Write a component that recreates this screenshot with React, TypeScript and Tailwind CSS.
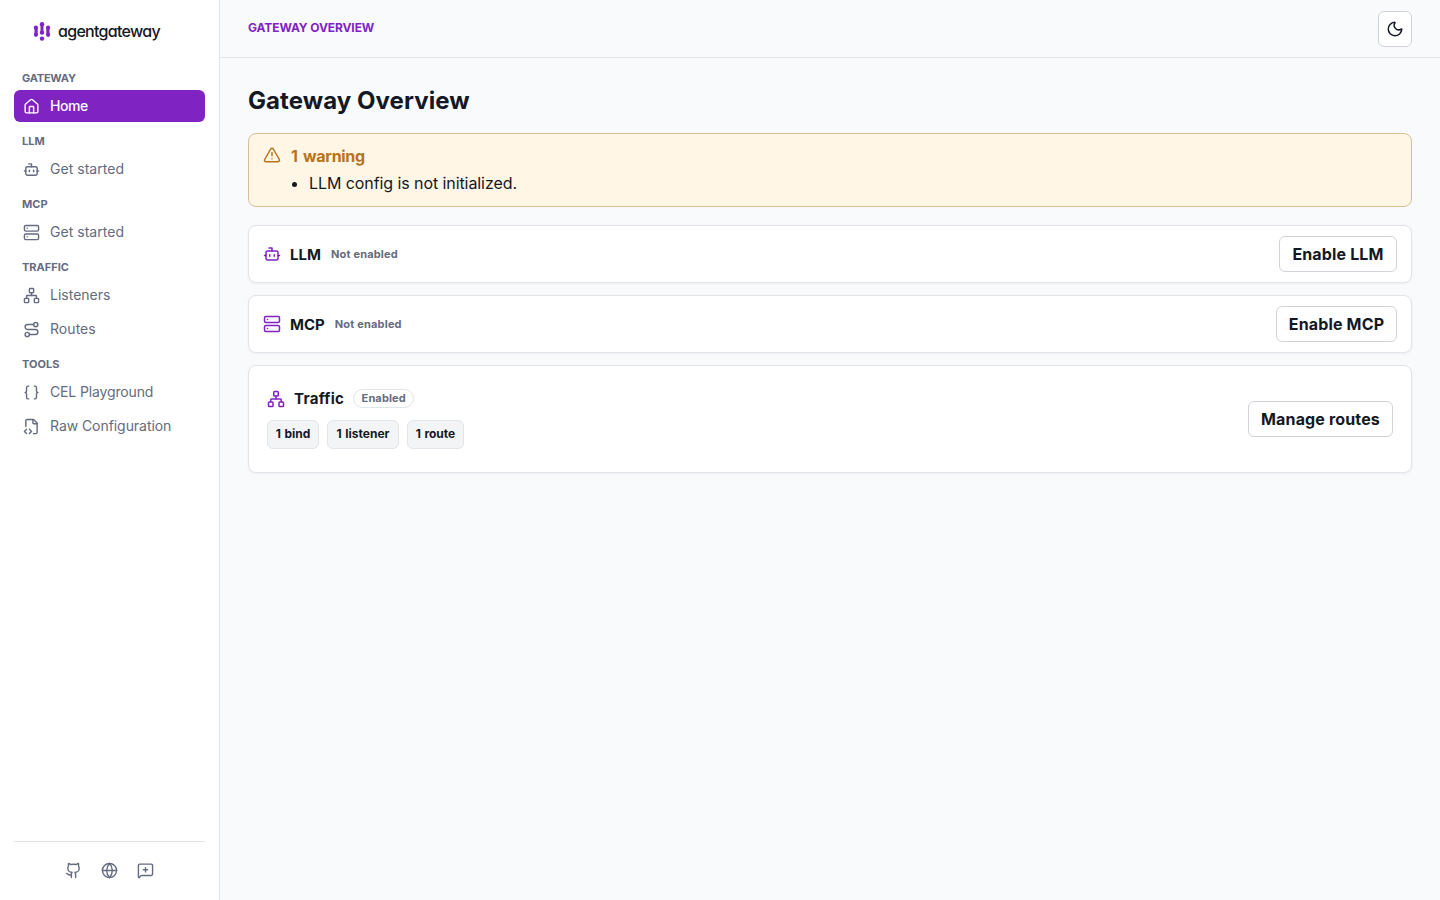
import type { ReactNode } from 'react';
import {
  Bot,
  Braces,
  FileCode2,
  Github,
  Globe,
  House,
  MessageSquarePlus,
  Moon,
  Network,
  Route,
  Server,
  TriangleAlert,
  type LucideIcon,
} from 'lucide-react';
import { clsx } from 'clsx';

type NavItem = { label: string; icon: LucideIcon; active?: boolean; tracking?: string };
type NavGroup = { title: string; tracking?: string; items: NavItem[] };

const groups: NavGroup[] = [
  {
    title: 'Gateway',
    tracking: 'tracking-[-0.2px]',
    items: [{ label: 'Home', icon: House, active: true, tracking: 'tracking-[-0.4px]' }],
  },
  { title: 'LLM', items: [{ label: 'Get started', icon: Bot, tracking: 'tracking-[0.03px]' }] },
  { title: 'MCP', items: [{ label: 'Get started', icon: Server, tracking: 'tracking-[0.03px]' }] },
  {
    title: 'Traffic',
    items: [
      { label: 'Listeners', icon: Network },
      { label: 'Routes', icon: Route, tracking: 'tracking-[0.05px]' },
    ],
  },
  {
    title: 'Tools',
    items: [
      { label: 'CEL Playground', icon: Braces, tracking: 'tracking-[-0.14px]' },
      { label: 'Raw Configuration', icon: FileCode2, tracking: 'tracking-[-0.06px]' },
    ],
  },
];

export default function App() {
  return (
    <div className="flex h-screen bg-[#f9fafc] font-['Inter',sans-serif] text-[#141824] antialiased">
      <Sidebar />
      <div className="flex min-w-0 flex-1 flex-col">
        <header className="flex h-[58px] shrink-0 items-center justify-between border-b border-[#e1e4e8] px-7">
          <span className="pb-0.5 text-xs font-bold tracking-[-0.1px] uppercase text-[#8023c3]">Gateway Overview</span>
          <button className="flex h-9 w-[34px] items-center justify-center rounded-md border border-[#d0d3d9] bg-white">
            <Moon className="size-[18px]" />
          </button>
        </header>
        <main className="flex flex-col px-7 pt-[27px]">
          <h1 className="text-2xl leading-8 font-bold tracking-[0.07px]">Gateway Overview</h1>
          <Warnings />
          <div className="mt-[18px] flex flex-col gap-3">
            <FeatureRow icon={Bot} title="LLM" action="Enable LLM" />
            <FeatureRow icon={Server} title="MCP" action="Enable MCP" />
            <TrafficCard />
          </div>
        </main>
      </div>
    </div>
  );
}

function Sidebar() {
  return (
    <aside className="flex w-[220px] shrink-0 flex-col border-r border-[#e1e4e8] bg-white px-3.5">
      <div className="flex h-[71px] items-start gap-[7px] pt-[21px] pl-[19px]">
        <Logo />
        <span className="text-base leading-5 font-medium tracking-[-0.7px] [font-feature-settings:'cv11']">
          agentgateway
        </span>
      </div>
      <nav className="flex flex-1 flex-col gap-3">
        {groups.map((group) => (
          <div key={group.title}>
            <div className={clsx('mb-[5px] pl-2 text-[11px] leading-[14px] font-bold uppercase text-[#656b80]', group.tracking)}>
              {group.title}
            </div>
            <div className="flex flex-col gap-0.5">
              {group.items.map((item) => (
                <a
                  key={item.label}
                  className={clsx(
                    'flex h-8 items-center gap-2.5 rounded-md pl-[9px] text-sm',
                    item.active ? 'bg-[#8023c3] font-medium text-white' : 'text-[#656b80]',
                    item.tracking,
                  )}
                >
                  <item.icon className="size-[17px]" />
                  {item.label}
                </a>
              ))}
            </div>
          </div>
        ))}
      </nav>
      <div className="flex h-[59px] items-center justify-center gap-[19px] border-t border-[#e1e4e8] pb-0.5 text-[#656b80]">
        <Github className="size-[17px]" />
        <Globe className="size-[17px]" />
        <MessageSquarePlus className="size-[17px]" />
      </div>
    </aside>
  );
}

function Warnings() {
  return (
    <section className="mt-4 h-[74px] rounded-lg border border-[#d9bf94] bg-[#fff6e5] px-3.5 pt-2.5">
      <div className="flex items-center gap-2.5 text-[#b87319]">
        <TriangleAlert className="mb-0.5 size-[18px]" />
        <span className="leading-6 font-bold tracking-[-0.3px] [word-spacing:2px]">1 warning</span>
      </div>
      <ul className="mt-[3px] list-disc pl-[46px]">
        <li className="leading-6 tracking-[-0.08px]">LLM config is not initialized.</li>
      </ul>
    </section>
  );
}

function Card({ className, children }: { className?: string; children: ReactNode }) {
  return (
    <section
      className={clsx(
        'flex items-center justify-between rounded-lg border border-[#e1e4e8] bg-white shadow-[0_1px_3px_rgba(20,24,36,0.05)]',
        className,
      )}
    >
      {children}
    </section>
  );
}

function ActionButton({ children, className }: { children: ReactNode; className?: string }) {
  return (
    <button
      className={clsx(
        'flex h-9 items-center justify-center rounded-md border border-[#d0d3d9] bg-white font-bold tracking-[0.15px]',
        className,
      )}
    >
      {children}
    </button>
  );
}

function FeatureRow({ icon: Icon, title, action }: { icon: LucideIcon; title: string; action: string }) {
  return (
    <Card className="h-[58px] px-3.5">
      <div className="flex items-center">
        <Icon className="mr-[9px] size-[18px] text-[#8023c3]" />
        <h2 className="mr-2.5 pt-0.5 text-[15px] leading-5 font-bold">{title}</h2>
        <span className="text-[11px] font-bold tracking-[0.18px] text-[#656b80]">Not enabled</span>
      </div>
      <ActionButton className={title === 'LLM' ? 'w-[118px]' : 'w-[121px]'}>{action}</ActionButton>
    </Card>
  );
}

function TrafficCard() {
  return (
    <Card className="h-[108px] px-[18px]">
      <div>
        <div className="flex items-center">
          <Network className="mr-[9px] size-[18px] text-[#8023c3]" />
          <h2 className="mr-[9px] text-[15px] leading-5 font-bold tracking-[0.3px]">Traffic</h2>
          <span className="mb-px flex h-[19px] w-[61px] items-center justify-center rounded-full border border-[#e1e4e8] text-[11px] font-bold tracking-[0.14px] text-[#656b80]">
            Enabled
          </span>
        </div>
        <div className="mt-[11px] flex gap-2 text-xs font-bold [word-spacing:0.7px]">
          <Stat className="w-[52px]">1 bind</Stat>
          <Stat className="w-[72px]">1 listener</Stat>
          <Stat className="w-[57px]">1 route</Stat>
        </div>
      </div>
      <ActionButton className="w-[145px]">Manage routes</ActionButton>
    </Card>
  );
}

function Stat({ children, className }: { children: ReactNode; className?: string }) {
  return (
    <span
      className={clsx(
        'flex h-[29px] items-center justify-center rounded-md border border-[#e1e4e8] bg-[#f2f4f6] pb-0.5',
        className,
      )}
    >
      {children}
    </span>
  );
}

function Logo() {
  return (
    <svg className="mt-px h-[19px] w-[18px]" viewBox="0 0 18 19" fill="#8023c3">
      <circle cx="2.9" cy="5.7" r="2.1" />
      <circle cx="2.9" cy="12.8" r="2.1" />
      <path d="M1.5 5.7h3.2v7.1H1.5z" />
      <circle cx="9" cy="2.2" r="2.2" />
      <circle cx="9" cy="10.6" r="2.2" />
      <path d="M7.5 2.2h3v8.4h-3z" />
      <circle cx="9" cy="16.6" r="2.2" />
      <circle cx="15.1" cy="5.7" r="2.1" />
      <circle cx="15.1" cy="12.8" r="2.1" />
      <path d="M13.3 5.7h3.2v7.1h-3.2z" />
    </svg>
  );
}
